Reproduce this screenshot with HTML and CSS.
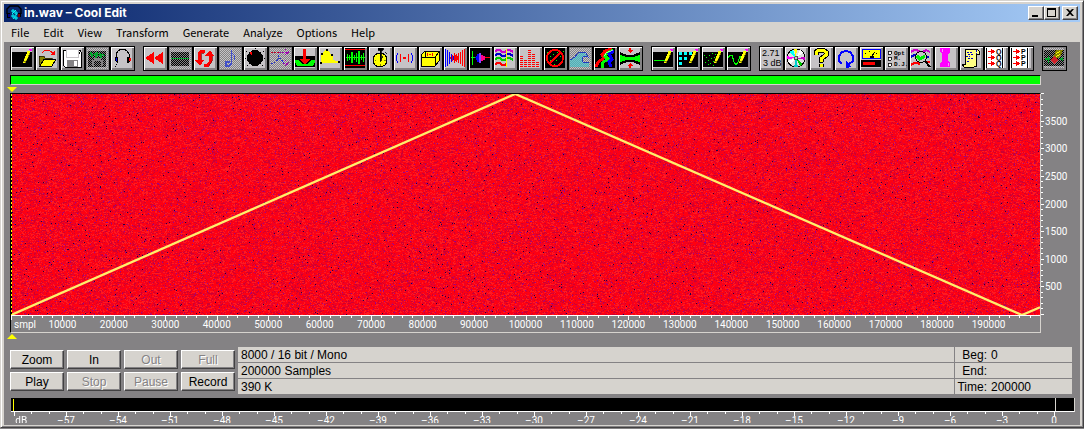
FILE: index.html
```
<!DOCTYPE html>
<html lang="en">
<head>
    <meta charset="UTF-8">
    <meta name="viewport" content="width=device-width, initial-scale=1.0">
    <title>in.wav – Cool Edit</title>
    <link rel="stylesheet" href="styles.css">
</head>
<body>
    <!-- shared icon parts -->
    <svg class="defs" width="0" height="0" aria-hidden="true">
        <defs>
            <pattern id="dither" width="2" height="2" patternUnits="userSpaceOnUse">
                <rect width="2" height="2" fill="#000"/>
                <path d="M0 0h1v1h-1zM1 1h1v1h-1z" fill="#848284"/>
            </pattern>
            <pattern id="ditherLight" width="2" height="2" patternUnits="userSpaceOnUse">
                <rect width="2" height="2" fill="#848284"/>
                <path d="M0 0h1v1h-1zM1 1h1v1h-1z" fill="#c6c3c6"/>
            </pattern>
            <symbol id="pencil" viewBox="0 0 21 21">
                <path d="M17 4L13 13L12 15" stroke="#848200" stroke-width="3" fill="none"/>
                <path d="M17 3L13 13" stroke="#ff0" stroke-width="2.4" fill="none"/>
                <path d="M17 1h3v2h-2z" fill="#f0f"/>
                <path d="M11 14h2v1h-2z" fill="#ff0"/>
            </symbol>
        </defs>
    </svg>

    <div class="window">
        <header class="titlebar">
            <svg class="app-icon" viewBox="0 0 16 16" fill="none">
                <path d="M1 9V4L4 1H12L15 4V9" stroke="#000" stroke-width="1.4"/>
                <path d="M1 8h3v5h-3zM12 8h3v4h-3z" fill="#000"/>
                <path d="M6 5h2v2h-2zM9 7h2v2h-2zM6 10h2v2h-2zM9 12h2v2h-2zM10 5L6 9M11 9L7 14" stroke="#0ff"/>
                <path d="M3 9v3" stroke="#00f"/>
                <path d="M13 9v3" stroke="#f00"/>
            </svg>
            <h1>in.wav – Cool Edit</h1>
            <div class="window-buttons">
                <button aria-label="Minimize"><svg viewBox="0 0 12 10"><path d="M2 7h6v2h-6z"/></svg></button>
                <button aria-label="Maximize"><svg viewBox="0 0 12 10"><path d="M1 0h9v9h-9zM2 2v6h7v-6z" fill-rule="evenodd"/></svg></button>
                <button class="close" aria-label="Close"><svg viewBox="0 0 12 10"><path d="M2 1h2l2 2l2-2h2l-3 3.500l3 3.500h-2l-2-2l-2 2h-2l3-3.500z"/></svg></button>
            </div>
        </header>

        <nav class="menubar">
            <button>File</button>
            <button>Edit</button>
            <button>View</button>
            <button>Transform</button>
            <button>Generate</button>
            <button>Analyze</button>
            <button>Options</button>
            <button>Help</button>
        </nav>

        <main class="client">
            <div class="toolbar">
                <div class="tool-group">
                    <button aria-label="New"><svg viewBox="0 0 21 21"><path d="M0 4h20v15h-20z"/><use href="#pencil"/></svg></button>
                    <button aria-label="Open"><svg viewBox="0 0 21 21">
                        <path d="M5 5L8 2H12L16 5" fill="none" stroke="#f00"/><path d="M18 2v5h-5z" fill="#f00"/>
                        <path d="M2 8h5l1 2h7v7h-13z" fill="#848200" stroke="#000" stroke-width=".6"/>
                        <path d="M7 11h12l-4 7h-12z" fill="#ff0" stroke="#000"/></svg></button>
                    <button aria-label="Save"><svg viewBox="0 0 21 21">
                        <path d="M1 2h17l1 2v15h-16l-2-2z" fill="#fff" stroke="#000"/>
                        <path d="M4 2v7h12v-7" fill="#fff" stroke="#c6c3c6"/>
                        <path d="M5 12h11v7h-11z" fill="#848284"/><path d="M12 13h3v5h-3z" fill="#fff"/><path d="M17 4h1v2h-1z"/></svg></button>
                    <button class="off" disabled aria-label="Save selection"><svg viewBox="0 0 21 21">
                        <path d="M1 3h18v16h-18z" fill="url(#dither)"/>
                        <path d="M2 6h1v-2h1v4h1v-2h2v-1h1v4h1v-5h1v3h2v-2h1v4h1v-3h2v1h2" fill="none" stroke="#00a22a"/>
                        <path d="M5 12h2v-2h7v2h2v6h-2v-5h-7v5h-2z" fill="#848284"/></svg></button>
                    <button aria-label="Listen"><svg viewBox="0 0 21 21">
                        <path d="M4 11V6L6 3L9 1H12L15 3L17 6V11" fill="none" stroke="#000"/>
                        <path d="M3 9h3v6h-1l-2-2zM15 9h3v4l-2 2h-1z"/><path d="M4 10h1v3h-1z" fill="#00f"/><path d="M17 10h2v3h-2z" fill="#f00"/>
                        <path d="M4 16h1v1h-1zM3 18h1v1h-1z"/></svg></button>
                </div>

                <div class="tool-group">
                    <button aria-label="Rewind"><svg viewBox="0 0 21 21"><path d="M0 10L9 4V16ZM9 10L18 4V16Z" fill="#f00"/></svg></button>
                    <button class="off" disabled aria-label="Silence"><svg viewBox="0 0 21 21"><path d="M1 4h18v14h-18z" fill="url(#dither)"/><path d="M1 10h18v1h-18z" fill="#00a22a"/></svg></button>
                    <button aria-label="Loop"><svg viewBox="0 0 21 21">
                        <path d="M10 3H6L4 6V13M9 17H13L15 14V7" fill="none" stroke="#f00" stroke-width="3"/>
                        <path d="M0 12h9l-4 6zM10 8h9l-4-6z" fill="#f00"/><path d="M9 5H7L6 7V12M17 8V13L14 18" fill="none" stroke="#840000" stroke-width=".7"/></svg></button>
                    <button class="off" disabled aria-label="Note"><svg viewBox="0 0 21 21"><path d="M11 2V16M11 2L12 5L15 8L14 12" fill="none" stroke="#4250c8"/><path d="M10 14H6V18H9L11 16" fill="none" stroke="#4250c8" stroke-width="2"/></svg></button>
                    <button aria-label="Amplify"><svg viewBox="0 0 21 21"><circle cx="10" cy="10" r="8"/><path d="M5 4h2v2h-2zM6 6h1v1h-1z" fill="#f00"/><path d="M1 3h1v1h-1zM18 3h1v1h-1zM0 10h1v1h-1zM19 10h1v1h-1zM2 17h1v1h-1zM17 17h1v1h-1zM10 0h1v1h-1z"/></svg></button>
                    <button class="off" disabled aria-label="Channel mixer"><svg viewBox="0 0 21 21" fill="none" stroke-dasharray="2 1">
                        <path d="M1 4h8" stroke="#c00020"/><path d="M9 4h10M15 1l4 3l-4 3M15 12l4 3l-4 3M13 15h6" stroke="#a000b0"/>
                        <path d="M1 15h3l7-6M8 7l6 8" stroke="#2030d0"/></svg></button>
                    <button aria-label="Delay"><svg viewBox="0 0 21 21"><path d="M0 8h20v11h-20z"/><path d="M0 12h4l3 4h6l3-4h4q0 4-3 6h-14q-3-2-3-6z" fill="#0f0"/><path d="M8 1h3v10h4l-5 6l-5-6h3z" fill="#f00"/></svg></button>
                    <button aria-label="Envelope"><svg viewBox="0 0 21 21"><path d="M1 15V6L5 2H8L13 9V12L19 14V15H1Z" fill="#ff0"/><path d="M0 14h2v2h-2zM1 5h2v2h-2zM6 1h2v2h-2zM11 6h2v2h-2zM18 13h2v2h-2z"/></svg></button>
                    <button class="black" aria-label="Waveform"><svg viewBox="0 0 21 21"><path d="M0 1h20v1h-20zM0 17h20v1h-20z" fill="#f00"/><path d="M1 9h19v1h-19zM2 6h1v7h-1zM4 7h1v5h-1zM6 4h2v11h-2zM9 7h1v5h-1zM11 5h1v9h-1zM13 3h2v13h-2zM16 7h1v5h-1zM18 5h1v9h-1z" fill="#0f0"/></svg></button>
                    <button aria-label="Time stretch"><svg viewBox="0 0 21 21"><circle cx="10" cy="12" r="7" fill="#ff0" stroke="#000"/><path d="M8 0h5v2h-2v4h-1v-4h-2zM10 6h1v7h-1zM13 8l-3 5M15 4l2 2" stroke="#000" stroke-width=".8"/><path d="M5 12h1v1h-1zM14 12h2v1h-2zM10 16h1v2h-1z" fill="#848200"/></svg></button>
                    <button aria-label="Echo"><svg viewBox="0 0 21 21" fill="none"><path d="M8 9h3v2h-3z" fill="#f00"/><path d="M6 6Q4 10 6 14M13 6Q15 10 13 14" stroke="#f00"/><path d="M3 5Q0 10 3 15M16 5Q19 10 16 15" stroke="#00f"/></svg></button>
                    <button aria-label="Echo chamber"><svg viewBox="0 0 21 21"><path d="M1 7L5 3H19V13L15 18H1Z" fill="#ff0" stroke="#000"/><path d="M1 9h14v9M15 9l4-5M5 3v6" fill="none" stroke="#000"/><path d="M9 6h2v1h-2zM7 5h1v3h-1zM12 5h1v3h-1z" fill="#f00"/></svg></button>
                    <button aria-label="Flanger"><svg viewBox="0 0 21 21"><path d="M0 1h1v18h-1zM2 2h1v16h-1zM4 4h1v12h-1zM6 6h1v8h-1zM8 8h1v4h-1z" fill="#00f"/><path d="M19 1h1v18h-1zM17 2h1v16h-1zM15 4h1v12h-1zM13 5h1v10h-1zM11 6h1v8h-1zM9 5h1v10h-1zM7 7h1v6h-1zM5 9h1v2h-1zM10 7h1v6h-1zM12 8h1v4h-1z" fill="#f00"/></svg></button>
                    <button class="black" aria-label="Filter"><svg viewBox="0 0 21 21"><path d="M2 3h1v14h-1zM1 9h5v1h-5z" fill="#0f0"/><path d="M5 9L7 7V13ZM7 6h2v8h-2z" fill="#00f"/><path d="M9 5h2v10h-2z" fill="#84f"/><path d="M11 7h2v6h-2zM13 8h2v4h-2z" fill="#f08"/><path d="M15 9h5v1h-5z" fill="#f00"/></svg></button>
                    <button aria-label="Chorus"><svg viewBox="0 0 21 21" fill="none" stroke-width="2"><path d="M0 4l2-2h3l2 2h3l2-2h3l3 2" stroke="#c0c"/><path d="M0 8l2-2h3l2 2h3l2-2h3l3 2" stroke="#00c"/><path d="M0 12l2-2h3l2 2h3l2-2h3l3 2" stroke="#0c0"/><path d="M0 17l2-2h3l2 2h3l1-2" stroke="#f00"/><path d="M11 1v18" stroke="#ff0" stroke-width="1"/></svg></button>
                    <button aria-label="Equalizer"><svg viewBox="0 0 21 21" fill="none" stroke="#f00" stroke-width="3" stroke-dasharray="1 1"><path d="M1.500 19V8M5.500 19V12M9.500 19V2M13.500 19V6M17.500 19V13"/></svg></button>
                    <button class="black" aria-label="Noise reduction"><svg viewBox="0 0 21 21"><path d="M2 4h1v1h-1zM5 12h1v1h-1zM8 6h1v1h-1zM12 4h1v1h-1zM15 8h1v1h-1zM11 12h1v1h-1zM4 16h1v1h-1zM16 15h1v1h-1zM18 3h1v1h-1zM9 16h1v1h-1zM5 8h1v1h-1zM1 10h1v1h-1zM13 16h1v1h-1z" fill="#0f0"/><circle cx="10" cy="10" r="8" fill="none" stroke="#f00" stroke-width="2"/><path d="M16 4L4 16" stroke="#f00" stroke-width="2"/></svg></button>
                    <button class="off" disabled aria-label="Distortion"><svg viewBox="0 0 21 21"><path d="M0 19V12L6 8L10 5L14 5L17 8L12 9L13 14L19 15V19Z" fill="#39c6ce" opacity=".6"/><path d="M0 12L5 9L8 5L12 4L16 5L18 9L14 8L12 10L13 14L19 15" fill="none" stroke="#2038c0"/></svg></button>
                    <button class="black" aria-label="Pan"><svg viewBox="0 0 21 21" fill="none"><path d="M17 1L10 3L7 7L9 10L3 14L1 19" stroke="#f00" stroke-width="3"/><path d="M18 2L12 5L10 8L13 11L7 15V20" stroke="#0f0" stroke-width="3"/><path d="M19 3L14 6L17 11L14 14L16 19" stroke="#00f" stroke-width="3"/><path d="M18 2L11 5L9 8" stroke="#fff" stroke-width=".6"/></svg></button>
                    <button aria-label="Compress"><svg viewBox="0 0 21 21"><path d="M0 4L7 7H13L20 4V17L13 14H7L0 17Z"/><path d="M0 7L7 9H13L20 7V14L13 12H7L0 14Z" fill="#0f0"/><path d="M9 0h2v2h2l-3 3l-3-3h2zM10 15l3 3h-2v2h-2v-2h-2z" fill="#f00"/></svg></button>
                </div>

                <div class="tool-group">
                    <button aria-label="Line"><svg viewBox="0 0 21 21"><path d="M0 4h20v15h-20z"/><path d="M1 12h11v1h-11z" fill="#0f0"/><use href="#pencil"/></svg></button>
                    <button aria-label="Blocks"><svg viewBox="0 0 21 21"><path d="M0 4h20v15h-20z"/><path d="M1 4h3v3h-3zM6 4h3v3h-3zM11 4h3v3h-3zM1 9h3v3h-3zM6 9h3v3h-3zM1 14h3v3h-3z" fill="#0ff"/><use href="#pencil"/></svg></button>
                    <button aria-label="Noise"><svg viewBox="0 0 21 21"><path d="M0 4h20v15h-20z"/><path d="M1 7h1v1h-1zM3 9h1v1h-1zM6 7h1v1h-1zM9 5h1v1h-1zM5 12h1v1h-1zM8 10h1v1h-1zM11 9h1v1h-1zM2 14h1v1h-1zM7 15h1v1h-1zM10 13h1v1h-1zM5 16h1v1h-1zM12 6h1v1h-1zM10 17h1v1h-1z" fill="#0f0"/><use href="#pencil"/></svg></button>
                    <button aria-label="Tone"><svg viewBox="0 0 21 21"><path d="M0 4h20v15h-20z"/><path d="M0 10L2 7L4 7L6 14L8 17L10 14L12 8L14 14" fill="none" stroke="#0f0"/><use href="#pencil"/></svg></button>
                </div>

                <div class="tool-group">
                    <button aria-label="Statistics"><svg viewBox="0 0 21 21"><text x="1" y="8">2.71</text><text x="2" y="18">3 dB</text></svg></button>
                    <button aria-label="CD player"><svg viewBox="0 0 21 21"><circle cx="10" cy="10" r="9" fill="#dedfde" stroke="#000"/><path d="M10 10L3 4L7 2Z" fill="#0ff"/><path d="M10 10L8 1H11Z" fill="#ff0"/><path d="M10 10L14 2L17 5Z" fill="#fff"/><path d="M10 10L1 8V11Z" fill="#f0f"/><path d="M10 10L2 13L4 16Z" fill="#fff"/><path d="M10 10L17 16L14 18Z" fill="#0c0"/><path d="M10 10L19 9V12Z" fill="#c0c"/><path d="M10 10L8 19H12Z" fill="#0cc"/><circle cx="10" cy="10" r="2" fill="#c6c3c6" stroke="#000" stroke-width=".6"/></svg></button>
                    <button aria-label="Help"><svg viewBox="0 0 21 21"><path d="M5 7V4L8 2H12L15 4V7L10 11V14M10 16v3" fill="none" stroke="#000" stroke-width="5"/><path d="M5 7V4L8 2H12L15 4V7L10 11V14M10 16v3" fill="none" stroke="#ff0" stroke-width="3"/><path d="M8 14h4v1h-4z"/></svg></button>
                    <button aria-label="Refresh"><svg viewBox="0 0 21 21"><path d="M6 16L3 13V8L6 4L10 3L14 4L17 8V13L13 16" fill="none" stroke="#00f" stroke-width="2"/><path d="M10 12v8l5-1l-2-3z" fill="#00f"/></svg></button>
                    <button aria-label="Meters"><svg viewBox="0 0 21 21"><path d="M1 1h18v9h-18z" fill="#ff0" stroke="#00f"/><path d="M10 9L14 4M4 5l1 1M8 3v1M16 5l-1 1M9 8h3v1h-3z" fill="none" stroke="#000"/><path d="M0 12h20v7h-20z"/><path d="M2 14h12v3h-12z" fill="#f00"/></svg></button>
                    <button aria-label="Options"><svg viewBox="0 0 21 21"><path d="M2 3h3v3h-3zM2 9h3v3h-3zM2 15h3v3h-3z" fill="#fff" stroke="#000" stroke-width=".8"/><text class="tiny" x="8" y="7">Opt</text><text class="tiny" x="8" y="12">M.</text><text class="tiny" x="8" y="18">D.J.</text></svg></button>
                    <button aria-label="Frequency analysis"><svg viewBox="0 0 21 21" fill="none" stroke-width="2"><path d="M0 4l3-2h3l3 2h3l3-2l4 2" stroke="#c0c"/><path d="M0 9l3-2h3l3 1h5l4 1" stroke="#00c"/><path d="M0 17l3-2h3l3 1M14 14h5" stroke="#f00"/><circle cx="10" cy="9" r="5.500" fill="#c6c3c6" stroke="#000" stroke-width="1"/><path d="M6 8l3 3l5-3" stroke="#0e0" stroke-width="3"/><path d="M14 13L19 19" stroke="#000"/></svg></button>
                    <button aria-label="Info"><svg viewBox="0 0 21 21"><path d="M4 0h10v4l-2 2v7l2 2v4h-10v-4l2-2v-7l-2-2z" fill="#f0f"/><path d="M6 1v3M12 15v3" stroke="#f8f"/></svg></button>
                    <button aria-label="Script"><svg viewBox="0 0 21 21"><path d="M4 1H16L18 3V6H15V14L16 18L13 19H3L1 16H4Z" fill="#ffff84" stroke="#000"/><path d="M6 4h5M7 6h5M5 8h4M7 10h5M6 13h3M15 2v4" stroke="#00c" stroke-dasharray="2 1"/></svg></button>
                    <button class="list" aria-label="Cue list"><svg viewBox="0 0 21 21"><path d="M0 0h1v20h-1zM16 0h1v20h-1z"/><path d="M2 3h6v1h-6zM5 1l4 2v1l-4 2zM2 9h6v1h-6zM5 7l4 2v1l-4 2zM2 15h6v1h-6zM5 13l4 2v1l-4 2z" fill="#f00"/><text class="tiny cue" x="10" y="6">Q</text><text class="tiny cue" x="10" y="12">Q</text><text class="tiny cue" x="10" y="18">Q</text></svg></button>
                    <button class="list" aria-label="Play list"><svg viewBox="0 0 21 21"><path d="M0 0h1v20h-1zM16 0h1v20h-1z"/><path d="M2 3h6v1h-6zM5 1l4 2v1l-4 2zM2 9h6v1h-6zM5 7l4 2v1l-4 2zM2 15h6v1h-6zM5 13l4 2v1l-4 2z" fill="#f00"/><text class="tiny cue" x="10" y="6">P</text><text class="tiny cue" x="10" y="12">P</text><text class="tiny cue" x="10" y="18">P</text></svg></button>
                </div>

                <div class="tool-group">
                    <button class="off flat" disabled aria-label="Synchronize"><svg viewBox="0 0 21 21"><path d="M0 1h20v18h-20z" fill="url(#dither)"/><path d="M0 0h20v2h-20zM0 18h20v2h-20z" fill="url(#ditherLight)"/><path d="M12 2h7l-2 6l-3 2l-5-1l2-4z" fill="#848200"/><path d="M12 6l4-3M12 9l5-4" stroke="#ff0" stroke-dasharray="1 1"/><path d="M10 8l4 4l-4 4l-4-4z" fill="#d02028"/><path d="M1 10h3v-3l2 4l-2 5v-4h-3zM16 10l3-1v4l-3-1z" fill="#00a22a"/></svg></button>
                </div>
            </div>

            <div class="progress"></div>

            <section class="wave">
                <span class="marker start"></span>
                <span class="marker end"></span>
                <div class="plot">
                    <canvas id="spectrum"></canvas>
                    <span class="cursor"></span>
                    <div class="ruler" id="timeRuler"><span class="unit">smpl</span></div>
                </div>
                <div class="freq-axis" id="freqAxis"></div>
            </section>

            <section class="controls">
                <div class="transport">
                    <button>Zoom</button>
                    <button>In</button>
                    <button disabled>Out</button>
                    <button disabled>Full</button>
                    <button>Play</button>
                    <button disabled>Stop</button>
                    <button disabled>Pause</button>
                    <button>Record</button>
                </div>
                <div class="info">
                    <div>8000 / 16 bit / Mono</div>
                    <div class="range"><span>Beg:</span><span>0</span></div>
                    <div>200000 Samples</div>
                    <div class="range"><span>End:</span><span></span></div>
                    <div>390 K</div>
                    <div class="range"><span>Time:</span><span>200000</span></div>
                </div>
            </section>

            <section class="level">
                <div class="meter"></div>
                <div class="db-scale" id="dbScale"></div>
            </section>
        </main>
    </div>

    <script src="script.js"></script>
</body>
</html>
```

FILE: styles.css
```
* {
    box-sizing: border-box;
}

body {
    margin: 0;
    background: #848284;
    font-family: "Liberation Sans", Arial, sans-serif;
    font-size: 12px;
    color: #000;
}

button {
    margin: 0;
    padding: 0;
    border: 0;
    font: inherit;
    color: inherit;
}

.defs {
    position: absolute;
}

.window {
    background: #d6d3ce;
    padding: 2px;
    border: 1px solid;
    border-color: #d6d3ce #424142 #424142 #d6d3ce;
    box-shadow: inset 1px 1px #fff, inset -1px -1px #848284;
}

/* title bar */
.titlebar {
    display: flex;
    align-items: center;
    height: 18px;
    margin: 1px 1px 0;
    padding: 0 2px;
    background: linear-gradient(to right, #08246b, #a5cbf7);
    color: #fff;
}

.app-icon {
    width: 16px;
    height: 16px;
    margin-right: 2px;
}

.titlebar h1 {
    flex: 1;
    margin: 0;
    font-family: Inter, sans-serif;
    font-size: 12px;
    line-height: 18px;
    font-weight: bold;
}

.window-buttons {
    display: flex;
}

.window-buttons button {
    width: 16px;
    height: 14px;
    padding: 2px;
    background: #d6d3ce;
    border: 1px solid;
    border-color: #fff #424142 #424142 #fff;
    box-shadow: inset -1px -1px #848284;
}

.window-buttons .close {
    margin-left: 2px;
}

.window-buttons svg {
    display: block;
    width: 12px;
    height: 10px;
    margin: -1px;
}

/* menu */
.menubar {
    display: flex;
    gap: 14px;
    height: 20px;
    padding-left: 8px;
}

.menubar button {
    background: none;
    font-family: "Noto Sans CJK JP", sans-serif;
    font-size: 11px;
    line-height: 16px;
}

.client {
    margin: 0 1px;
    padding: 4px 0 2px 6px;
    background: #848284;
}

/* toolbar */
.toolbar {
    display: flex;
    gap: 8px;
}

.tool-group {
    display: flex;
}

.tool-group button {
    width: 25px;
    height: 25px;
    padding: 1px;
    background: #c6c3c6;
    border: 1px solid #000;
    box-shadow: inset 1px 1px #fff, inset -2px -2px #848284;
}

.tool-group svg {
    display: block;
    width: 21px;
    height: 21px;
    shape-rendering: crispEdges;
}

.tool-group .black svg {
    background: linear-gradient(#000, #000) 0 0 / 20px 20px no-repeat;
}

.tool-group .list {
    background: linear-gradient(to right, #fff 19px, #c6c3c6 19px);
}

.tool-group .off {
    background: repeating-conic-gradient(#848284 0 25%, #c6c3c6 0 50%) 0 0 / 2px 2px;
    box-shadow: inset 0 0 0 1px #848284;
}

.tool-group .flat {
    background: #848284;
}

.tool-group text {
    font-size: 9px;
}

.tool-group .tiny {
    font-family: "Liberation Mono", monospace;
    font-size: 6px;
    font-weight: bold;
}

.tool-group .cue {
    font-family: "Liberation Sans", sans-serif;
    font-size: 7px;
}

.progress {
    height: 10px;
    margin: 4px 39px 0 0;
    background: #0f0;
    border: 1px solid;
    border-color: #000 #d6d3ce #d6d3ce #000;
}

/* spectrogram */
.wave {
    position: relative;
    display: grid;
    grid-template-columns: 1fr 39px;
    padding-top: 8px;
    font-family: Roboto, sans-serif;
    font-size: 10px;
    color: #fff;
}

.plot {
    position: relative;
    min-width: 0;
    border: 1px solid;
    border-color: #000 #d6d3ce #d6d3ce #000;
}

.plot canvas {
    display: block;
    width: 100%;
    height: 221px;
}

.cursor {
    position: absolute;
    top: 0;
    left: 0;
    width: 1px;
    height: 221px;
    background: repeating-linear-gradient(#ff0 0 2px, #000 2px 4px);
}

.marker {
    position: absolute;
    left: -3px;
    border: 5px solid transparent;
}

.marker.start {
    top: 2px;
    border-top-color: #ff0;
    border-bottom: 0;
}

.marker.end {
    bottom: -6px;
    border-bottom-color: #ff0;
    border-top: 0;
}

.ruler {
    position: relative;
    height: 17px;
    border-top: 1px solid #fff;
}

.unit {
    position: absolute;
    left: 3px;
    top: 3px;
    line-height: 12px;
}

.tick {
    position: absolute;
    top: 0;
    width: 1px;
    height: 2px;
    background: #fff;
}

.tick.major {
    height: 4px;
}

.label {
    position: absolute;
    top: 3px;
    line-height: 12px;
    transform: translateX(-50%);
}

.freq-axis {
    position: relative;
    height: 221px;
    margin-top: 1px;
}

.freq-axis .tick {
    top: auto;
    left: 0;
    width: 2px;
    height: 1px;
}

.freq-axis .tick.major {
    width: 3px;
}

.freq-axis .label {
    top: auto;
    left: 4px;
    transform: translateY(50%);
}

/* transport and file info */
.controls {
    display: flex;
    gap: 3px;
    margin: 14px 8px 0 0;
}

.transport {
    display: grid;
    grid-template-columns: repeat(4, 54px);
    grid-auto-rows: 19px;
    gap: 3px;
    padding-top: 3px;
}

.transport button {
    background: #d6d3ce;
    border: 1px solid;
    border-color: #fff #424142 #424142 #fff;
    box-shadow: inset -1px -1px #848284;
    line-height: 16px;
}

.transport button:disabled {
    color: #848284;
    text-shadow: 1px 1px #fff;
}

.info {
    flex: 1;
    display: grid;
    grid-template-columns: 1fr 117px;
    grid-auto-rows: 15px;
    gap: 1px;
    line-height: 14px;
}

.info div {
    padding: 1px 0 0 3px;
    background: #d6d3ce;
}

.info .range {
    display: flex;
    gap: 4px;
    padding-left: 2px;
}

.range span:first-child {
    width: 30px;
    text-align: right;
}

/* level meter */
.level {
    margin: 4px 5px 0 1px;
}

.meter {
    height: 14px;
    background:
        linear-gradient(#ff0, #ff0) 2px 1px / 1px 12px no-repeat,
        linear-gradient(#d6d3ce, #d6d3ce) calc(100% - 18px) 0 / 1px 100% no-repeat,
        #000;
    border-right: 1px solid #d6d3ce;
    border-bottom: 1px solid #fff;
}

.db-scale {
    position: relative;
    height: 11px;
    margin: 0 21px 0 3px;
    font-family: Roboto, sans-serif;
    font-size: 10px;
    color: #fff;
    clip-path: inset(0 -20px);
}
```

FILE: script.js
```
const TOTAL_SAMPLES = 200000;
const MAX_FREQ = 4000;
const MIN_DB = -60;

// sweep line: sample position and frequency
const sweep = [[0, 0], [98000, 4000], [196500, 0], [200000, 140]];

function addTick(parent, side, percent, major) {
    const tick = document.createElement('span');
    tick.className = major ? 'tick major' : 'tick';
    tick.style[side] = percent + '%';
    parent.appendChild(tick);
}

function addLabel(parent, side, percent, text) {
    const label = document.createElement('span');
    label.className = 'label';
    label.style[side] = percent + '%';
    label.textContent = text;
    parent.appendChild(label);
}

function buildScales() {
    const time = document.getElementById('timeRuler');
    for (let s = 0; s < TOTAL_SAMPLES; s += 2000) {
        const major = s % 10000 === 0;
        addTick(time, 'left', s / TOTAL_SAMPLES * 100, major);
        if (major && s > 0) addLabel(time, 'left', s / TOTAL_SAMPLES * 100, s);
    }

    const freq = document.getElementById('freqAxis');
    for (let f = 0; f <= MAX_FREQ; f += 100) {
        const major = f % 500 === 0;
        addTick(freq, 'bottom', f / MAX_FREQ * 100, major);
        if (major && f > 0 && f < MAX_FREQ) addLabel(freq, 'bottom', f / MAX_FREQ * 100, f);
    }

    const db = document.getElementById('dbScale');
    for (let d = MIN_DB; d <= 0; d++) {
        const major = d % 3 === 0;
        const percent = (d - MIN_DB) / -MIN_DB * 100;
        addTick(db, 'left', percent, major);
        if (d === MIN_DB) addLabel(db, 'left', 0.7, 'dB');
        else if (major) addLabel(db, 'left', percent, d === 0 ? '0' : '–' + -d);
    }
}

function drawSpectrum() {
    const canvas = document.getElementById('spectrum');
    const w = canvas.width = canvas.clientWidth;
    const h = canvas.height = canvas.clientHeight;
    const ctx = canvas.getContext('2d');
    const image = ctx.createImageData(w, h);

    let seed = 12345;
    function random() {
        seed = (seed * 1664525 + 1013904223) >>> 0;
        return seed / 4294967296;
    }

    for (let y = 0; y < h; y++) {
        let color = [255, 0, 30];
        for (let x = 0; x < w; x++) {
            const r = random();
            if (r < 0.006) color = [30, 0, 70];
            else if (r < 0.022) color = [150, 0, 150];
            else if (r < 0.14) color = [205, 0, 50];
            else if (r < 0.32) color = [235, 0, 40];
            else if (r < 0.68) color = [255, 0, 16];
            else if (r < 0.84) color = [255, 26, 32];
            // otherwise the previous bin carries on
            else if (color[0] < 200) color = [255, 0, 24];
            const i = (y * w + x) * 4;
            image.data[i] = color[0];
            image.data[i + 1] = color[1];
            image.data[i + 2] = color[2];
            image.data[i + 3] = 255;
        }
    }
    ctx.putImageData(image, 0, 0);

    ctx.strokeStyle = '#ffef6b';
    ctx.lineWidth = 2.4;
    ctx.beginPath();
    sweep.forEach(([s, f]) => {
        ctx.lineTo(s / TOTAL_SAMPLES * w, h - f / MAX_FREQ * h);
    });
    ctx.stroke();
}

buildScales();
drawSpectrum();
window.addEventListener('resize', drawSpectrum);
```
